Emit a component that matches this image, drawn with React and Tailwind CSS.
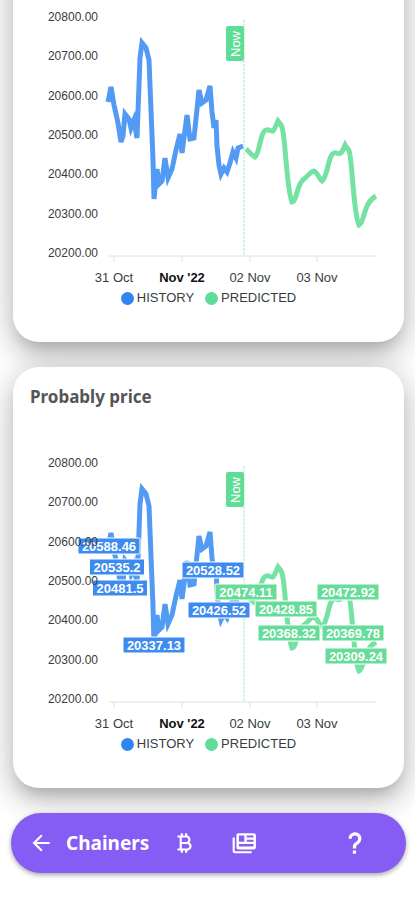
const HISTORY =
  "108,102 111,87 114,105 118,123 121,142 123,136 125,114 129,119 131,128 134,120 137,138 139,85 140,58 142,43 146,48 149,60 151,110 153,160 154,199 157,169 159,184 162,181 165,158 168,178 172,169 176,150 180,134 182,153 187,115 190,139 194,138 199,90 202,103 206,100 210,86 212,112 214,128 216,120 217,146 219,165 221,174 224,168 227,172 230,163 233,152 236,158 238,148 243,146";

const PREDICTED =
  "M246 149C249 151 251 155 255 157C260 153 260 132 266 130C269 129 271 132 273 131C275 129 276 125 278 121C281 125 282 124 283 132C286 150 287 190 292 202C297 201 297 183 304 179C308 176 311 171 314 171C318 173 319 179 322 181C328 176 328 155 334 153C337 152 338 155 341 153C343 151 344 147 345 145C347 149 349 147 350 155C353 175 354 216 359 225C365 222 363 203 376 196";

const PRICES = [20800, 20700, 20600, 20500, 20400, 20300, 20200];
const DATES = [
  { label: "31 Oct", x: 114 },
  { label: "Nov '22", x: 182, bold: true },
  { label: "02 Nov", x: 250 },
  { label: "03 Nov", x: 317 },
];

const BLUE = "#3d8bef";
const GREEN = "#65dc98";

const LABELS = [
  { text: "20588.46", x: 109, y: 100, color: BLUE },
  { text: "20535.2", x: 117, y: 121, color: BLUE },
  { text: "20481.5", x: 120, y: 142, color: BLUE },
  { text: "20337.13", x: 154, y: 199, color: BLUE },
  { text: "20528.52", x: 213, y: 124, color: BLUE },
  { text: "20426.52", x: 219, y: 164, color: BLUE },
  { text: "20474.11", x: 246, y: 146, color: GREEN },
  { text: "20428.85", x: 286, y: 163, color: GREEN },
  { text: "20368.32", x: 289, y: 187, color: GREEN },
  { text: "20472.92", x: 348, y: 146, color: GREEN },
  { text: "20369.78", x: 353, y: 187, color: GREEN },
  { text: "20309.24", x: 356, y: 210, color: GREEN },
];

function DataLabel({ text, x, y, color }) {
  const width = text.length > 7 ? 62 : 55;
  return (
    <g>
      <rect x={x - width / 2} y={y - 8} width={width} height="16" rx="1" fill={color} stroke="#fff" />
      <text x={x} y={y + 5} textAnchor="middle" fill="#fff" className="text-[13px] font-bold">
        {text}
      </text>
    </g>
  );
}

function PriceChart({ labels = [] }) {
  return (
    <div className="font-['Liberation_Sans',Arial,sans-serif]">
      <svg viewBox="13 0 391 288" className="block w-full" role="img" aria-label="Price chart">
        <path d="M109 256H376M114 256v6M182 256v6M250 256v6M317 256v6" stroke="#e0e0e0" fill="none" />
        <polyline points={HISTORY} fill="none" stroke="#529af3" strokeWidth="5" />
        <path d={PREDICTED} fill="none" stroke="#74e2a2" strokeWidth="5" />
        <path d="M244 20V256" stroke="#a6e8c6" strokeWidth="1" strokeDasharray="3 1" />
        <rect x="226" y="26" width="18" height="35" rx="2" fill="#5fdc95" />
        <text transform="translate(240 44) rotate(-90)" textAnchor="middle" fill="#fff" className="text-[13px]">
          Now
        </text>
        {labels.map((item) => (
          <DataLabel key={item.text} {...item} />
        ))}
        {PRICES.map((price, i) => (
          <text key={price} x="98" y={21 + Math.round(i * 39.3)} textAnchor="end" fill="#373d3f" className="text-[12px]">
            {price.toFixed(2)}
          </text>
        ))}
        {DATES.map(({ label, x, bold }) => (
          <text
            key={label}
            x={x}
            y="282"
            textAnchor="middle"
            fill={bold ? "#111" : "#373d3f"}
            className={bold ? "text-[13px] font-bold" : "text-[13px]"}
          >
            {label}
          </text>
        ))}
      </svg>
      <ul className="flex justify-center gap-[11px] pt-0.5 text-[13px] leading-4 text-[#373d3f]">
        <li className="flex items-center gap-[3px]">
          <span className="size-[13px] rounded-full bg-[#2f86f3]" />
          HISTORY
        </li>
        <li className="flex items-center gap-[3px]">
          <span className="size-[13px] rounded-full bg-[#5fdc95]" />
          PREDICTED
        </li>
      </ul>
    </div>
  );
}

const CARD_SHADOW =
  "shadow-[0_11px_15px_-7px_rgba(0,0,0,0.2),0_12px_30px_3px_rgba(0,0,0,0.14),0_6px_32px_6px_rgba(0,0,0,0.1)]";

function Icon({ d }) {
  return (
    <svg viewBox="0 0 24 24" className="size-[26px]" fill="currentColor" fillRule="evenodd" aria-hidden="true">
      <path d={d} />
    </svg>
  );
}

const ARROW = "M20 11V13H8L13.5 18.5L12.08 19.92L4.16 12L12.08 4.08L13.5 5.5L8 11H20Z";
const BITCOIN =
  "M17.06 11.57c.59-.69.94-1.59.94-2.57 0-1.86-1.27-3.43-3-3.87V3h-2v2h-2V3H9v2H6v2h2v10H6v2h3v2h2v-2h2v2h2v-2c2.21 0 4-1.79 4-4 0-1.45-.78-2.73-1.94-3.43zM10 7h4c1.1 0 2 .9 2 2s-.9 2-2 2h-4V7zm5 10h-5v-4h5c1.1 0 2 .9 2 2s-.9 2-2 2z";
const NEWS =
  "M3.5 7V19.5H19V21.5H3.5A2 2 0 0 1 1.5 19.5V7H3.5ZM7 3H21A2 2 0 0 1 23 5V16A2 2 0 0 1 21 18H7A2 2 0 0 1 5 16V5A2 2 0 0 1 7 3ZM7.3 5V10.8H12.3V5H7.3ZM14.5 5V7H20.8V5H14.5ZM14.5 9V10.8H20.8V9H14.5ZM7.3 13V15.2H20.8V13H7.3Z";
const HELP =
  "M10 19H13V22H10V19M12 2C17.35 2.22 19.68 7.62 16.5 11.67C15.67 12.67 14.33 13.33 13.67 14.17C13 15 13 16 13 17H10C10 15.33 10 13.92 10.67 12.92C11.33 11.92 12.67 11.33 13.5 10.67C15.92 8.43 15.32 5.26 12 5A3 3 0 0 0 9 8H6A6 6 0 0 1 12 2Z";

export default function App() {
  return (
    <div className="flex min-h-screen flex-col overflow-hidden bg-white font-['Noto_Sans',sans-serif]">
      <main className="-mt-20 ml-[13px] mr-[11px] flex flex-col gap-[25px]">
        <section className={`rounded-[26px] bg-white pt-20 pb-9 ${CARD_SHADOW}`}>
          <PriceChart />
        </section>
        <section className={`rounded-[26px] bg-white pb-9 ${CARD_SHADOW}`}>
          <h2 className="px-[17px] pb-[37px] pt-[18px] text-[17px] leading-6 font-bold text-[#555]">Probably price</h2>
          <PriceChart labels={LABELS} />
        </section>
      </main>
      <nav className="relative mt-[25px] ml-[11px] mr-[9px] flex h-[60px] items-center rounded-full bg-[#855cf4] pl-[17px] pr-[38px] text-white shadow-[0_2px_5px_rgba(0,0,0,0.35)]">
        <button type="button" aria-label="Back">
          <Icon d={ARROW} />
        </button>
        <a href="#home" className="ml-3 text-[19px] leading-6 font-bold">
          Chainers
        </a>
        <a href="#bitcoin" aria-label="Bitcoin" className="ml-[22px]">
          <Icon d={BITCOIN} />
        </a>
        <a href="#news" aria-label="News" className="ml-[34px]">
          <Icon d={NEWS} />
        </a>
        <button type="button" aria-label="Help" className="ml-auto">
          <Icon d={HELP} />
        </button>
      </nav>
    </div>
  );
}
